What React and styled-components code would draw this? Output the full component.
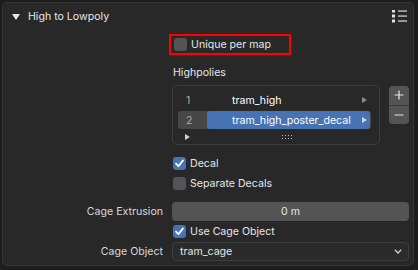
import React from 'react';
import styled, { createGlobalStyle } from 'styled-components';

const Global = createGlobalStyle`
  html, body { margin: 0; padding: 0; background: #1d1d1d; }
  body {
    width: 418px; height: 270px; overflow: hidden;
    font-family: Inter, "DejaVu Sans", sans-serif;
    font-size: 10.6px; color: #e6e6e6;
  }
  * { box-sizing: border-box; }
`;

const Panel = styled.div`
  margin: 2px 4px 0 2px;
  height: 264px;
  border: 1px solid #363636;
  border-radius: 5px;
  background: #282828;
  display: flex;
  flex-direction: column;
`;

const Header = styled.div`
  height: 27px;
  display: flex;
  align-items: center;
  padding: 0 6px 0 9px;
`;

const Title = styled.span`
  flex: 1;
  margin-left: 8px;
  color: #e6e6e6;
`;

const Body = styled.div`
  display: grid;
  grid-template-columns: 160px 237px;
  column-gap: 9px;
  align-items: center;
`;

const Label = styled.div`
  grid-column: 1;
  text-align: right;
  color: #d9d9d9;
  height: ${p => p.$h || 20}px;
  line-height: ${p => p.$h || 20}px;
  margin-top: ${p => p.$mt || 0}px;
`;

const Cell = styled.div`
  grid-column: 2;
  display: flex;
  align-items: center;
  height: ${p => p.$h || 20}px;
  margin-top: ${p => p.$mt || 0}px;
`;

const RedBox = styled.div`
  display: flex;
  align-items: center;
  height: 21px;
  width: 122px;
  margin-left: -3px;
  padding-left: 2px;
  border: 2px solid #ff0000;
`;

const Box = styled.span`
  width: 13px;
  height: 13px;
  border-radius: 3px;
  margin-left: 1px;
  background: ${p => (p.$on ? '#4772b3' : '#545454')};
  display: inline-flex;
  align-items: center;
  justify-content: center;
  flex: none;
`;

const CheckText = styled.span`
  margin-left: 4px;
  color: #e6e6e6;
`;

const SubLabel = styled.span`
  margin-left: 1px;
  color: #e6e6e6;
`;

const ListRow = styled.div`
  grid-column: 2;
  display: flex;
  height: 60px;
  margin-top: 3px;
`;

const ListBox = styled.div`
  width: 210px;
  height: 60px;
  border: 1px solid #3d3d3d;
  border-radius: 5px;
  background: #282828;
  padding: 5px 8px 0 5px;
  display: flex;
  flex-direction: column;
  gap: 2px;
`;

const Item = styled.div`
  height: 18px;
  display: flex;
  align-items: center;
  border-radius: 3px;
  background: ${p => (p.$active ? '#474747' : 'transparent')};
  position: relative;
`;

const Num = styled.span`
  width: 29px;
  padding-left: 8px;
  color: #a8a8a8;
`;

const Name = styled.div`
  flex: 1;
  height: 18px;
  display: flex;
  align-items: center;
  padding-left: 25px;
  border-radius: 3px;
  margin-right: 1px;
  background: ${p => (p.$active ? '#4772b3' : 'transparent')};
  color: #ffffff;
`;

const Arrow = styled.span`
  position: absolute;
  right: 4px;
  top: 6px;
  width: 0;
  height: 0;
  border-top: 3px solid transparent;
  border-bottom: 3px solid transparent;
  border-left: 5px solid ${p => (p.$light ? '#d0d8e8' : '#8a8a8a')};
`;

const ListFoot = styled.div`
  height: 10px;
  display: flex;
  align-items: center;
  padding-left: 7px;
  margin-top: 1px;
`;

const FootTri = styled.span`
  width: 0;
  height: 0;
  border-top: 3px solid transparent;
  border-bottom: 3px solid transparent;
  border-left: 5px solid #d0d0d0;
`;

const Grip = styled.svg`
  margin-left: 92px;
`;

const Btns = styled.div`
  margin-left: 9px;
  margin-top: 1px;
  width: 20px;
  height: 38px;
  border-radius: 4px;
  overflow: hidden;
  display: flex;
  flex-direction: column;
  gap: 1px;
  background: #3a3a3a;
`;

const Btn = styled.div`
  flex: 1;
  background: #545454;
  display: flex;
  align-items: center;
  justify-content: center;
`;

const Field = styled.div`
  width: 237px;
  height: 19px;
  border-radius: 4px;
  background: #545454;
  display: flex;
  align-items: center;
  justify-content: center;
  color: #e6e6e6;
`;

const Dropdown = styled.div`
  width: 237px;
  height: 19px;
  border-radius: 4px;
  border: 1px solid #3d3d3d;
  background: #2b2b2b;
  display: flex;
  align-items: center;
  padding: 0 6px 0 7px;
  color: #e6e6e6;
`;

const DropText = styled.span`
  flex: 1;
`;

const Check = () => (
  <svg width="11" height="11" viewBox="0 0 11 11">
    <path d="M2 5.6 L4.4 8.2 L9 2.4" fill="none" stroke="#fff" strokeWidth="1.8" strokeLinecap="round" strokeLinejoin="round" />
  </svg>
);

const Checkbox = ({ on, children }) => (
  <>
    <Box $on={on}>{on && <Check />}</Box>
    <CheckText>{children}</CheckText>
  </>
);

const MenuIcon = () => (
  <svg width="15" height="13" viewBox="0 0 15 13">
    {[1, 6, 11].map(y => (
      <g key={y}>
        <rect x="0" y={y - 1.5} width="3" height="3" fill="#e0e0e0" />
        <rect x="6" y={y - 0.6} width="9" height="1.3" fill="#cfcfcf" />
      </g>
    ))}
  </svg>
);

export default function App() {
  return (
    <>
      <Global />
      <Panel>
        <Header>
          <svg width="8" height="6" viewBox="0 0 8 6">
            <path d="M0 0 H8 L4 6 Z" fill="#e6e6e6" />
          </svg>
          <Title>High to Lowpoly</Title>
          <MenuIcon />
        </Header>
        <Body>
          <Cell $h={21} $mt={4}>
            <RedBox>
              <Checkbox on={false}>Unique per map</Checkbox>
            </RedBox>
          </Cell>
          <Cell $mt={7}>
            <SubLabel>Highpolies</SubLabel>
          </Cell>
          <ListRow>
            <ListBox>
              <Item>
                <Num>1</Num>
                <Name>tram_high</Name>
                <Arrow />
              </Item>
              <Item $active>
                <Num>2</Num>
                <Name $active>tram_high_poster_decal</Name>
                <Arrow $light />
              </Item>
              <ListFoot>
                <FootTri />
                <Grip width="10" height="4" viewBox="0 0 10 4">
                  {[0, 3, 6, 9].map(x => (
                    <g key={x}>
                      <rect x={x} y="0" width="1" height="1" fill="#bbb" />
                      <rect x={x} y="3" width="1" height="1" fill="#bbb" />
                    </g>
                  ))}
                </Grip>
              </ListFoot>
            </ListBox>
            <Btns>
              <Btn>
                <svg width="10" height="10" viewBox="0 0 10 10">
                  <path d="M5 0.5 V9.5 M0.5 5 H9.5" stroke="#e6e6e6" strokeWidth="1.2" />
                </svg>
              </Btn>
              <Btn>
                <svg width="10" height="10" viewBox="0 0 10 10">
                  <path d="M0.5 5 H9.5" stroke="#e6e6e6" strokeWidth="1.2" />
                </svg>
              </Btn>
            </Btns>
          </ListRow>
          <Cell $mt={8}>
            <Checkbox on>Decal</Checkbox>
          </Cell>
          <Cell>
            <Checkbox on={false}>Separate Decals</Checkbox>
          </Cell>
          <Label $h={19} $mt={9}>Cage Extrusion</Label>
          <Cell $h={19} $mt={9}>
            <Field>0 m</Field>
          </Cell>
          <Cell>
            <Checkbox on>Use Cage Object</Checkbox>
          </Cell>
          <Label $h={19} $mt={1}>Cage Object</Label>
          <Cell $h={19} $mt={1}>
            <Dropdown>
              <DropText>tram_cage</DropText>
              <svg width="8" height="5" viewBox="0 0 8 5">
                <path d="M0.8 0.8 L4 4 L7.2 0.8" fill="none" stroke="#d0d0d0" strokeWidth="1.3" />
              </svg>
            </Dropdown>
          </Cell>
        </Body>
      </Panel>
    </>
  );
}
